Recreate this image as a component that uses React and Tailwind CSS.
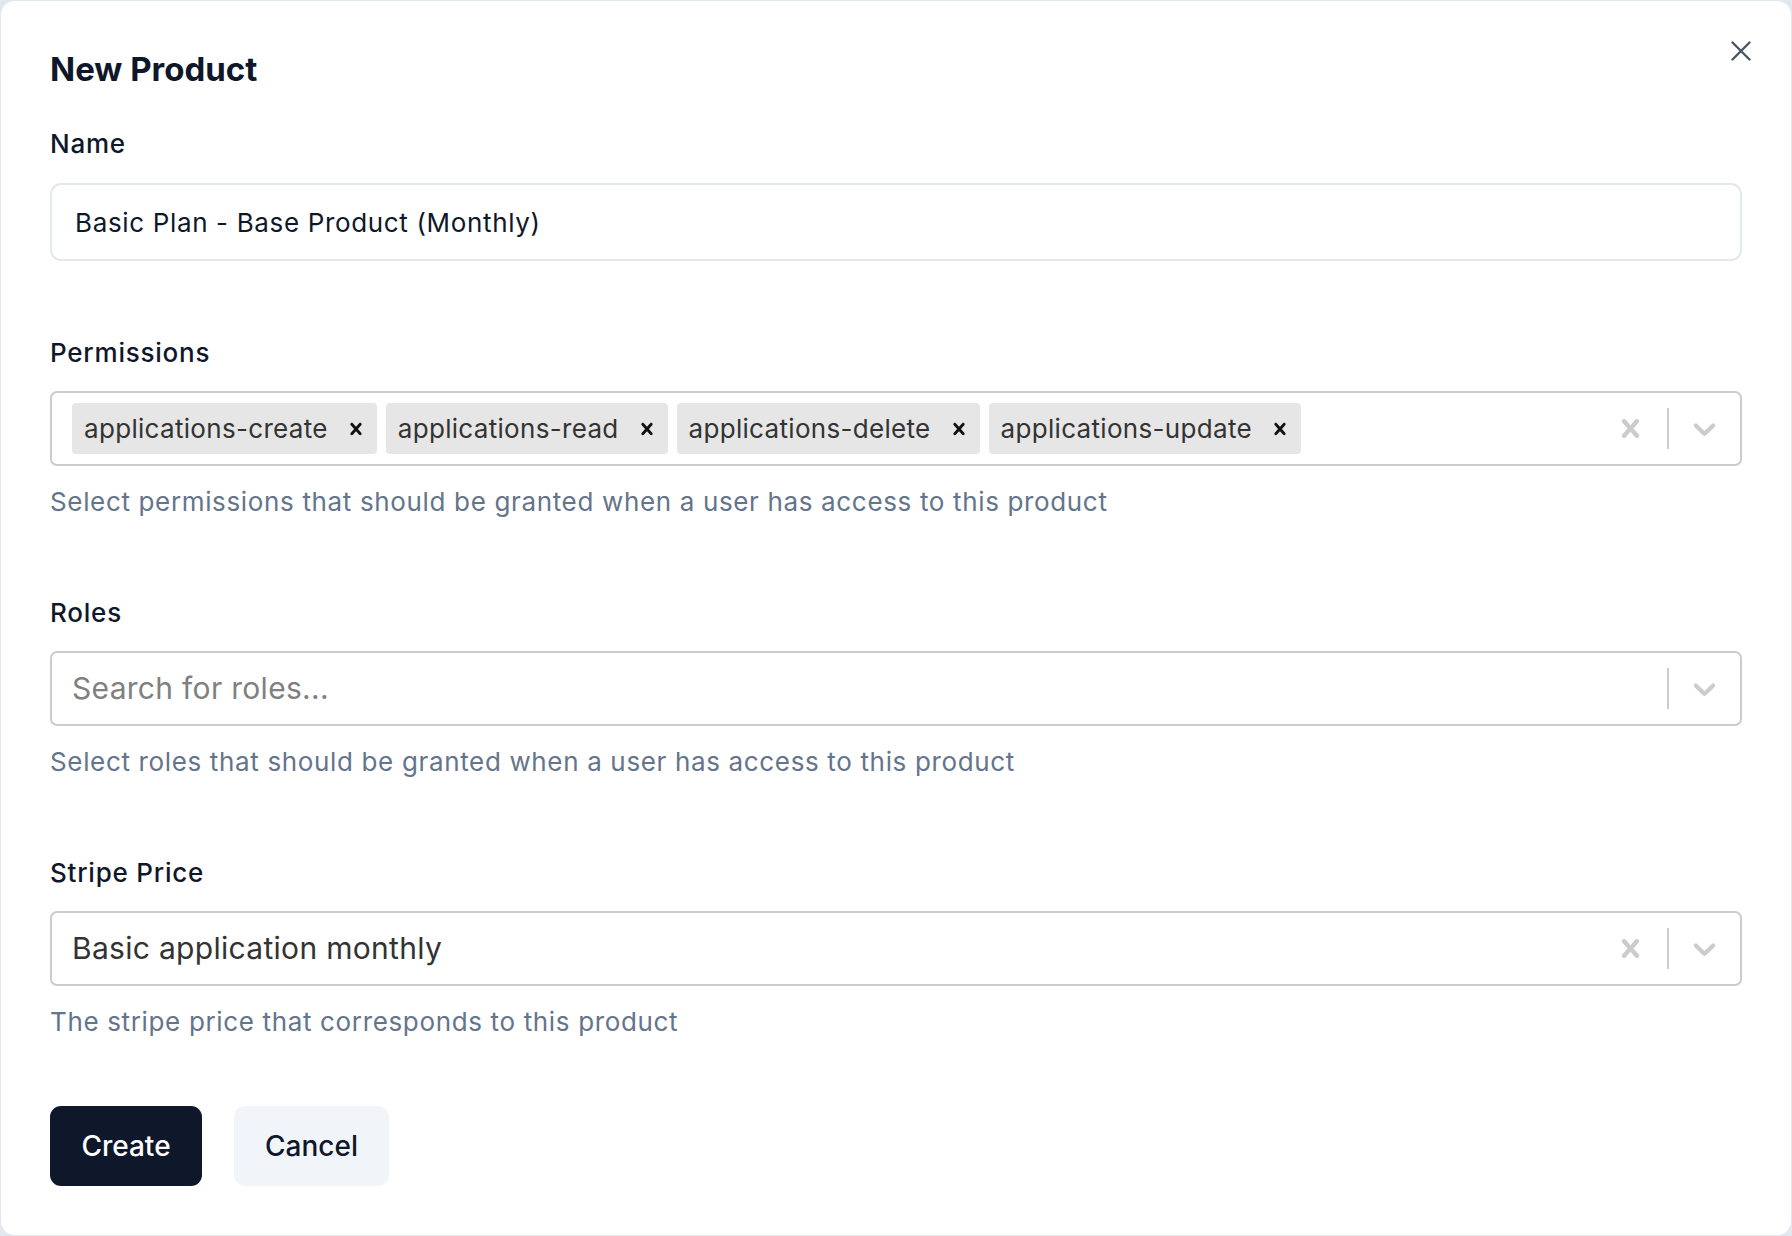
import React from 'react';

const crossPath =
  'M14.348 14.849c-0.469 0.469-1.229 0.469-1.697 0l-2.651-3.030-2.651 3.029c-0.469 0.469-1.229 0.469-1.697 0-0.469-0.469-0.469-1.229 0-1.697l2.758-3.15-2.759-3.152c-0.469-0.469-0.469-1.228 0-1.697s1.228-0.469 1.697 0l2.652 3.031 2.651-3.031c0.469-0.469 1.228-0.469 1.697 0s0.469 1.229 0 1.697l-2.758 3.152 2.758 3.15c0.469 0.469 0.469 1.229 0 1.698z';
const chevronPath =
  'M4.516 7.548c0.436-0.446 1.043-0.481 1.576 0l3.908 3.747 3.908-3.747c0.533-0.481 1.141-0.446 1.574 0 0.436 0.445 0.408 1.197 0 1.615-0.406 0.418-4.695 4.502-4.695 4.502-0.217 0.223-0.502 0.335-0.787 0.335s-0.57-0.112-0.789-0.335c0 0-4.287-4.084-4.695-4.502s-0.436-1.17 0-1.615z';

const Cross = ({ size, className }) => (
  <svg width={size} height={size} viewBox="0 0 20 20" fill="currentColor" className={className} aria-hidden="true">
    <path d={crossPath} />
  </svg>
);

const Chevron = ({ size, className }) => (
  <svg width={size} height={size} viewBox="0 0 20 20" fill="currentColor" className={className} aria-hidden="true">
    <path d={chevronPath} />
  </svg>
);

const permissions = ['applications-create', 'applications-read', 'applications-delete', 'applications-update'];

const Label = ({ children, className = '' }) => (
  <label className={`block text-[26px] leading-[32px] font-medium tracking-[0.03em] text-[#0f172a] ${className}`}>{children}</label>
);

const Helper = ({ children }) => (
  <p className="mt-[20px] text-[26px] leading-[32px] tracking-[0.025em] text-[#64748b]">{children}</p>
);

const Indicators = ({ clearable }) => (
  <div className="flex items-center self-stretch">
    {clearable && (
      <div className="pr-[18px] text-[#cccccc]">
        <Cross size={37} />
      </div>
    )}
    <span className="w-[2px] self-stretch my-[15px] bg-[#cccccc]" />
    <div className="px-[17px] text-[#cccccc]">
      <Chevron size={37} />
    </div>
  </div>
);

const SelectBox = ({ children, clearable }) => (
  <div className="mt-[22px] flex h-[75px] w-full items-center rounded-[7px] border-2 border-[#cccccc] bg-white">
    <div className="flex flex-1 items-center gap-[9px] pl-[20px] min-w-0">{children}</div>
    <Indicators clearable={clearable} />
  </div>
);

export default function App() {
  return (
    <div className="w-[1792px] h-[1236px] bg-[#e2e8f0] p-px font-['Inter','Noto_Sans',sans-serif]">
      <div className="relative h-full rounded-[14px] bg-white px-[49px] pt-[48px]">
        <button className="absolute right-[40px] top-[40px] text-[#4b5563]" aria-label="Close">
          <svg width="20" height="20" viewBox="0 0 20 20" fill="none" stroke="currentColor" strokeWidth="2.4" strokeLinecap="round">
            <path d="M1.5 1.5l17 17M18.5 1.5l-17 17" />
          </svg>
        </button>

        <h2 className="text-[33px] leading-[40px] font-bold text-[#0f172a]">New Product</h2>

        <Label className="mt-[39px]">Name</Label>
        <input
          type="text"
          defaultValue="Basic Plan - Base Product (Monthly)"
          className="mt-[23px] block h-[78px] w-full rounded-[11px] border-2 border-[#e2e8f0] bg-white px-[23px] text-[26px] tracking-[0.025em] text-[#0f172a] outline-none"
        />

        <Label className="mt-[76px]">Permissions</Label>
        <SelectBox clearable>
          {permissions.map((p) => (
            <div key={p} className="flex h-[51px] items-center rounded-[4px] bg-[#e6e6e6] pl-[12px]">
              <span className="text-[26px] tracking-[0.012em] text-[#333333]">{p}</span>
              <Cross size={24} className="ml-[16px] mr-[9px] text-[#111111]" />
            </div>
          ))}
        </SelectBox>
        <Helper>Select permissions that should be granted when a user has access to this product</Helper>

        <Label className="mt-[79px]">Roles</Label>
        <SelectBox>
          <span className="text-[30px] tracking-[0.01em] text-[#808080]">Search for roles...</span>
        </SelectBox>
        <Helper>Select roles that should be granted when a user has access to this product</Helper>

        <Label className="mt-[79px]">Stripe Price</Label>
        <SelectBox clearable>
          <span className="text-[30px] tracking-[0.01em] text-[#333333]">Basic application monthly</span>
        </SelectBox>
        <Helper>The stripe price that corresponds to this product</Helper>

        <div className="mt-[68px] flex gap-[32px]">
          <button className="h-[80px] w-[152px] rounded-[11px] bg-[#0f172a] text-[28px] font-medium text-white">Create</button>
          <button className="h-[80px] w-[155px] rounded-[11px] bg-[#f1f5f9] text-[28px] font-medium text-[#0f172a]">Cancel</button>
        </div>
      </div>
    </div>
  );
}
